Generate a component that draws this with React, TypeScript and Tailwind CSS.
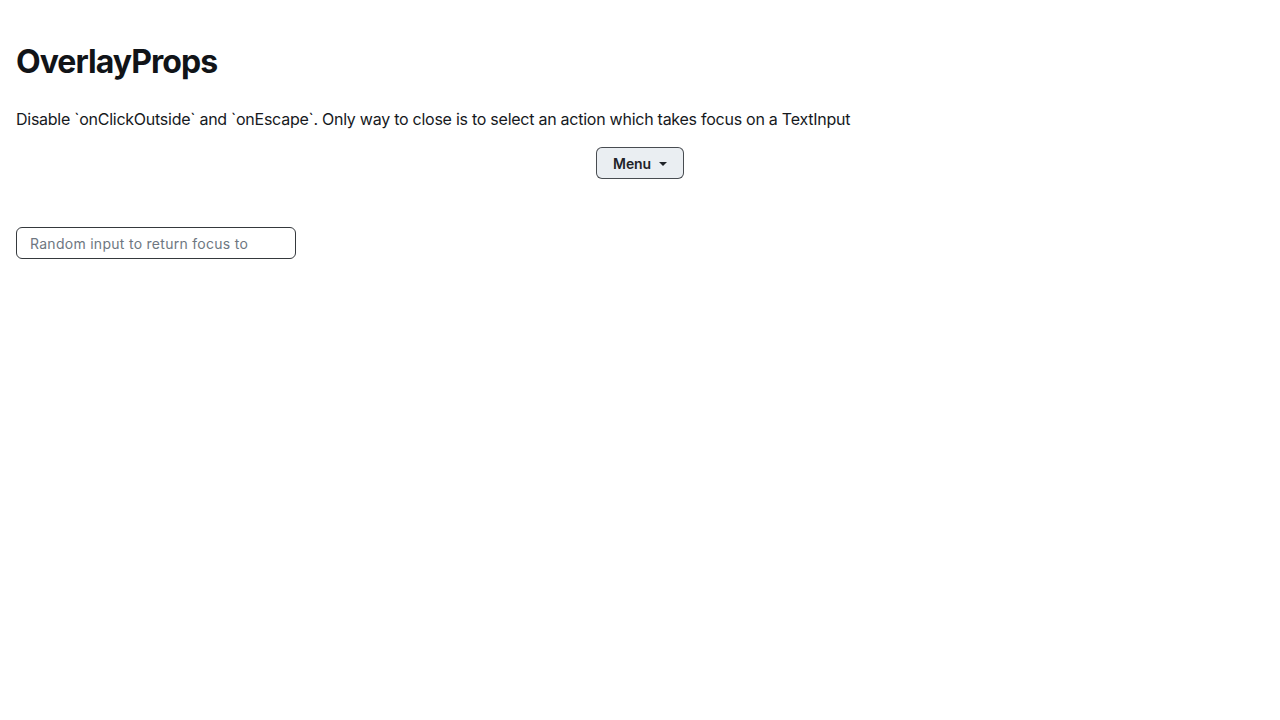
export default function App() {
  return (
    <div className="min-h-screen bg-white p-4 text-[#1f2328]" style={{ fontFamily: "Inter, 'Noto Sans', sans-serif" }}>
      <h1 className="mt-[26px] text-[32px] font-bold leading-[40px] tracking-[-0.03em] text-[#111418]">OverlayProps</h1>
      <p className="mt-[25px] text-[16px] leading-[24px] tracking-[-0.016em] text-[#16191d]">
        Disable `onClickOutside` and `onEscape`. Only way to close is to select an action which takes focus on a TextInput
      </p>
      <div className="mt-4 flex justify-center">
        <button className="flex h-8 w-[88px] items-center justify-center gap-2 rounded-md border border-[#1f2328]/80 bg-[#eaeef2] text-[14px] font-semibold tracking-[-0.01em] text-[#1f2328]">
          Menu
          <svg width="8" height="4" viewBox="0 0 8 4" className="mt-[1px]">
            <path d="M0 0 L8 0 L4 4 Z" fill="#1f2328" />
          </svg>
        </button>
      </div>
      <div className="mt-12">
        <input
          placeholder="Random input to return focus to"
          className="h-8 w-[280px] rounded-md border border-[#1f2328]/90 px-[13px] text-[14px] tracking-[0.02em] outline-none placeholder:text-[#6e7781]"
        />
      </div>
    </div>
  );
}
